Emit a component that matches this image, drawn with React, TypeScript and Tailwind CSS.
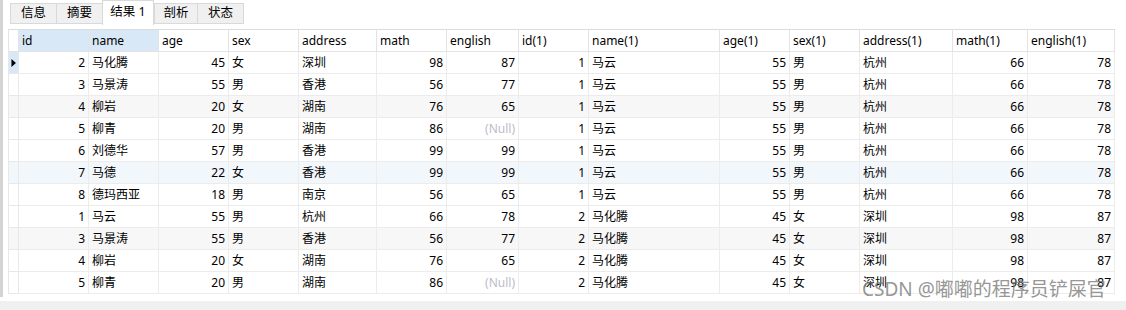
import React from "react";

const cols = [
  { name: "id", w: 70, r: true },
  { name: "name", w: 70, r: false },
  { name: "age", w: 70, r: true },
  { name: "sex", w: 70, r: false },
  { name: "address", w: 78, r: false },
  { name: "math", w: 70, r: true },
  { name: "english", w: 72, r: true },
  { name: "id(1)", w: 70, r: true },
  { name: "name(1)", w: 131, r: false },
  { name: "age(1)", w: 70, r: true },
  { name: "sex(1)", w: 70, r: false },
  { name: "address(1)", w: 93, r: false },
  { name: "math(1)", w: 75, r: true },
  { name: "english(1)", w: 87, r: true },
];

const A = ["1", "马云", "55", "男", "杭州", "66", "78"];
const B = ["2", "马化腾", "45", "女", "深圳", "98", "87"];

const left: string[][] = [
  ["2", "马化腾", "45", "女", "深圳", "98", "87"],
  ["3", "马景涛", "55", "男", "香港", "56", "77"],
  ["4", "柳岩", "20", "女", "湖南", "76", "65"],
  ["5", "柳青", "20", "男", "湖南", "86", ""],
  ["6", "刘德华", "57", "男", "香港", "99", "99"],
  ["7", "马德", "22", "女", "香港", "99", "99"],
  ["8", "德玛西亚", "18", "男", "南京", "56", "65"],
  ["1", "马云", "55", "男", "杭州", "66", "78"],
  ["3", "马景涛", "55", "男", "香港", "56", "77"],
  ["4", "柳岩", "20", "女", "湖南", "76", "65"],
  ["5", "柳青", "20", "男", "湖南", "86", ""],
];

const rows = left.map((l, i) => [...l, ...(i < 7 ? A : B)]);

const rowBg = (i: number) =>
  i === 2 || i === 8 ? "bg-[#f7f7f7]" : i === 5 ? "bg-[#f2f7fc]" : "bg-white";

const tabs = [
  { t: "信息", w: 47 },
  { t: "摘要", w: 47 },
  { t: "结果 1", w: 52, active: true },
  { t: "剖析", w: 44 },
  { t: "状态", w: 47 },
];

export default function App() {
  return (
    <div
      className="relative w-[1126px] h-[310px] bg-white overflow-hidden text-[12px] text-black"
      style={{ fontFamily: '"Noto Sans", "Noto Sans CJK SC", sans-serif' }}
    >
      <div className="flex h-[301px]">
        <div className="w-[3px] h-[297px] bg-[#d4d4d4]" />
        <div className="flex flex-col pl-[5px]">
          {/* tabs */}
          <div className="flex items-start ml-[2px] h-[29px]">
            {tabs.map((tb) =>
              tb.active ? (
                <div
                  key={tb.t}
                  style={{ width: tb.w }}
                  className="h-[25px] bg-white border-t border-x border-[#d9d9d9] flex items-center justify-center text-[12.5px] leading-none pb-[1px]"
                >
                  {tb.t}
                </div>
              ) : (
                <div
                  key={tb.t}
                  style={{ width: tb.w }}
                  className="mt-[3px] h-[21px] bg-[#f0f0f0] border border-[#d9d9d9] -mr-[1px] flex items-center justify-center text-[12.5px] leading-none"
                >
                  {tb.t}
                </div>
              )
            )}
          </div>
          {/* table */}
          <div className="border-t border-[#dcdcdc]">
            <div className="flex h-[22px]">
              <div className="w-[11px] border-x border-b border-[#e3e3e3] bg-white" />
              {cols.map((c, ci) => (
                <div
                  key={c.name}
                  style={{ width: c.w }}
                  className={`border-r border-b border-[#e3e3e3] flex items-center pl-[3px] leading-none ${
                    ci < 2 ? "bg-[#d9e8f7]" : "bg-white"
                  }`}
                >
                  {c.name}
                </div>
              ))}
            </div>
            {rows.map((r, i) => (
              <div key={i} className={`flex h-[22px] ${rowBg(i)}`}>
                <div
                  className={`w-[11px] border-x border-b border-[#e8e8e8] flex items-center ${
                    i === 0 ? "bg-[#d9e8f7]" : ""
                  }`}
                >
                  {i === 0 && (
                    <svg width="11" height="12" viewBox="0 0 11 12">
                      <path d="M3 1 L8.5 6 L3 11 Z" fill="#000" />
                    </svg>
                  )}
                </div>
                {r.map((v, ci) => (
                  <div
                    key={ci}
                    style={{ width: cols[ci].w }}
                    className={`border-r border-b border-[#ececec] flex items-center leading-none whitespace-nowrap ${
                      cols[ci].r ? "justify-end pr-[3px]" : "pl-[3px]"
                    }`}
                  >
                    {v === "" ? (
                      <span className="text-[#bcbccc]">(Null)</span>
                    ) : (
                      v
                    )}
                  </div>
                ))}
              </div>
            ))}
          </div>
        </div>
      </div>
      <div className="h-[9px] bg-[#f0f0f0]" />
      <div className="absolute left-[862px] top-[280px] text-[19px] leading-none text-[#7a7a7a]/80 whitespace-nowrap">
        CSDN @嘟嘟的程序员铲屎官
      </div>
    </div>
  );
}
